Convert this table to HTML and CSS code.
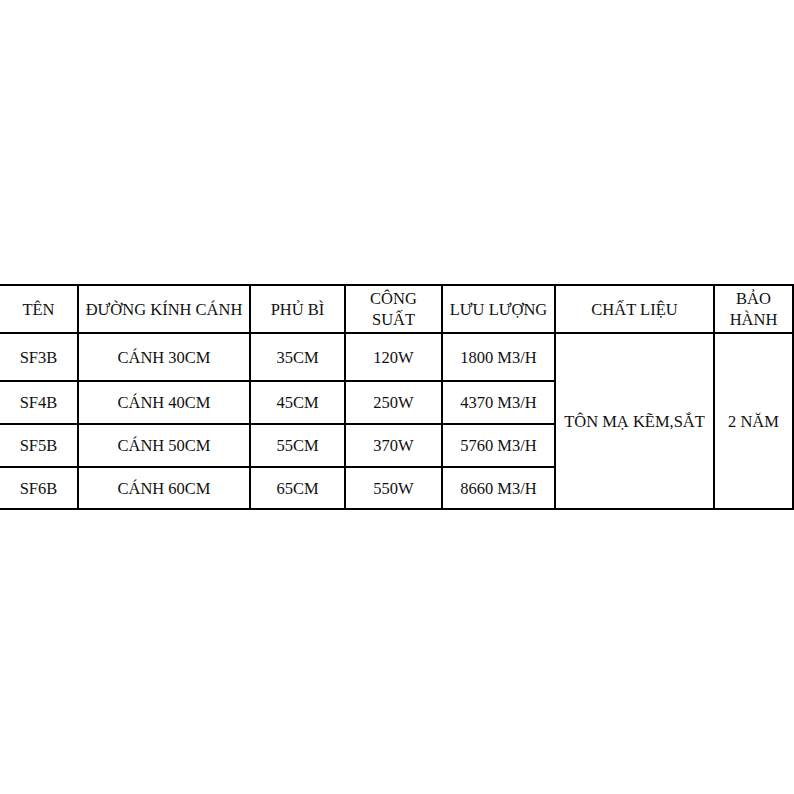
FILE: index.html
```html
<!DOCTYPE html>
<html lang="vi">
<head>
<meta charset="utf-8">
<title>Bảng thông số</title>
<link rel="stylesheet" href="styles.css">
</head>
<body>
<div class="page">
<table class="spec">
  <colgroup>
    <col class="c1"><col class="c2"><col class="c3"><col class="c4"><col class="c5"><col class="c6"><col class="c7">
  </colgroup>
  <thead>
    <tr class="head">
      <th class="first">TÊN</th>
      <th>ĐƯỜNG KÍNH CÁNH</th>
      <th>PHỦ BÌ</th>
      <th>CÔNG<br>SUẤT</th>
      <th>LƯU LƯỢNG</th>
      <th>CHẤT LIỆU</th>
      <th>BẢO<br>HÀNH</th>
    </tr>
  </thead>
  <tbody>
    <tr class="r1">
      <td class="first">SF3B</td>
      <td>CÁNH 30CM</td>
      <td>35CM</td>
      <td>120W</td>
      <td>1800 M3/H</td>
      <td rowspan="4">TÔN MẠ KẼM,SẮT</td>
      <td rowspan="4">2 NĂM</td>
    </tr>
    <tr class="r2">
      <td class="first">SF4B</td>
      <td>CÁNH 40CM</td>
      <td>45CM</td>
      <td>250W</td>
      <td>4370 M3/H</td>
    </tr>
    <tr class="r3">
      <td class="first">SF5B</td>
      <td>CÁNH 50CM</td>
      <td>55CM</td>
      <td>370W</td>
      <td>5760 M3/H</td>
    </tr>
    <tr class="r4">
      <td class="first">SF6B</td>
      <td>CÁNH 60CM</td>
      <td>65CM</td>
      <td>550W</td>
      <td>8660 M3/H</td>
    </tr>
  </tbody>
</table>
</div>
</body>
</html>
```
FILE: styles.css
```css
html, body {
  margin: 0;
  padding: 0;
  background: #ffffff;
}

.page {
  padding-top: 284px;
}

.spec {
  border-collapse: collapse;
  table-layout: fixed;
  width: 793px;
  font-family: "Liberation Serif", "Times New Roman", serif;
  font-size: 16.5px;
  color: #111111;
}

.c1 { width: 78px; }
.c2 { width: 172px; }
.c3 { width: 95px; }
.c4 { width: 97px; }
.c5 { width: 113px; }
.c6 { width: 159px; }
.c7 { width: 79px; }

.spec th,
.spec td {
  border: 2px solid #000000;
  text-align: center;
  vertical-align: middle;
  padding: 0;
  font-weight: normal;
  line-height: 21px;
  white-space: nowrap;
}

.spec .first {
  border-left: none;
}

.head { height: 48px; }
.r1 { height: 48px; }
.r2 { height: 43px; }
.r3 { height: 43px; }
.r4 { height: 42px; }
```
